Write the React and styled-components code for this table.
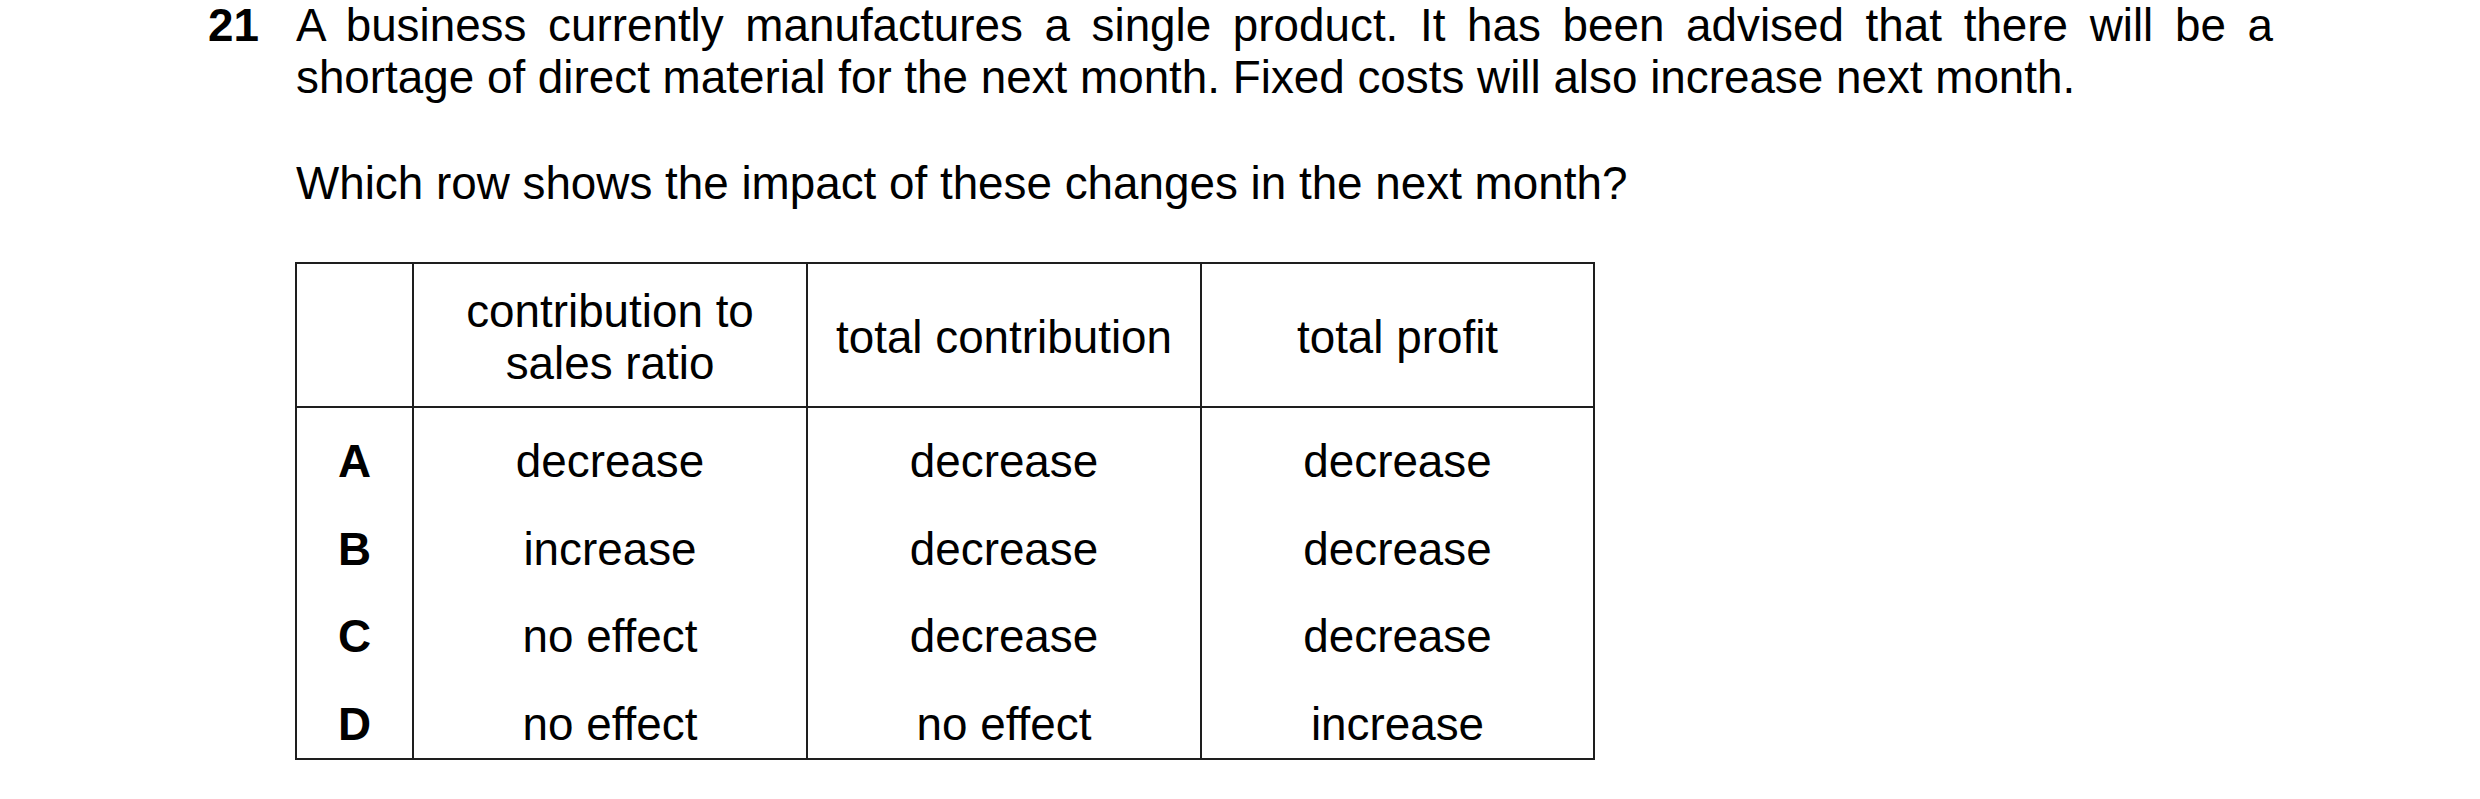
import React from 'react'
import styled, { createGlobalStyle } from 'styled-components'

const GlobalStyle = createGlobalStyle`
  html, body {
    margin: 0;
    padding: 0;
    background: #ffffff;
  }
  body {
    font-family: "Liberation Sans", Arial, sans-serif;
    color: #000000;
  }
`;

const Page = styled.div`
  width: 2480px;
  height: 799px;
  padding-left: 208px;
  box-sizing: border-box;
  display: flex;
  font-size: 45.8px;
  line-height: 52px;
`;

const Number = styled.div`
  width: 88px;
  flex: none;
  font-weight: bold;
`;

const Body = styled.div`
  width: 1977px;
  flex: none;
`;

const Paragraph = styled.p`
  margin: 0 0 ${({ gap }) => gap || 0}px 0;
  text-align: ${({ justify }) => justify ? 'justify' : 'left'};
`;

const Grid = styled.div`
  width: 1300px;
  margin-left: -1px;
  box-sizing: border-box;
  border: 2px solid #1e1e1e;
  display: grid;
  grid-template-columns: 115px 394px 394px 393px;
  grid-template-rows: 144px repeat(4, 87.5px);
`;

const HeadCell = styled.div`
  box-sizing: border-box;
  padding-top: 5px;
  border-bottom: 2px solid #1e1e1e;
  border-left: ${({ first }) => first ? 'none' : '2px solid #1e1e1e'};
  display: flex;
  align-items: center;
  justify-content: center;
  text-align: center;
  white-space: pre-line;
`;

const Cell = styled.div`
  box-sizing: border-box;
  border-left: ${({ first }) => first ? 'none' : '2px solid #1e1e1e'};
  padding-top: 28px;
  text-align: center;
  font-weight: ${({ bold }) => bold ? 'bold' : 'normal'};
`;

const headers = ['', 'contribution to\nsales ratio', 'total contribution', 'total profit'];

const rows = [
  ['A', 'decrease', 'decrease', 'decrease'],
  ['B', 'increase', 'decrease', 'decrease'],
  ['C', 'no effect', 'decrease', 'decrease'],
  ['D', 'no effect', 'no effect', 'increase'],
];

export default function App() {
  return (
    <>
      <GlobalStyle />
      <Page>
        <Number>21</Number>
        <Body>
          <Paragraph justify gap={54}>
            A business currently manufactures a single product. It has been advised that there will be a
            shortage of direct material for the next month. Fixed costs will also increase next month.
          </Paragraph>
          <Paragraph gap={52}>Which row shows the impact of these changes in the next month?</Paragraph>
          <Grid>
            {headers.map((h, i) => (
              <HeadCell key={'h' + i} first={i === 0}>{h}</HeadCell>
            ))}
            {rows.map((r) =>
              r.map((c, i) => (
                <Cell key={r[0] + i} first={i === 0} bold={i === 0}>{c}</Cell>
              ))
            )}
          </Grid>
        </Body>
      </Page>
    </>
  );
}
